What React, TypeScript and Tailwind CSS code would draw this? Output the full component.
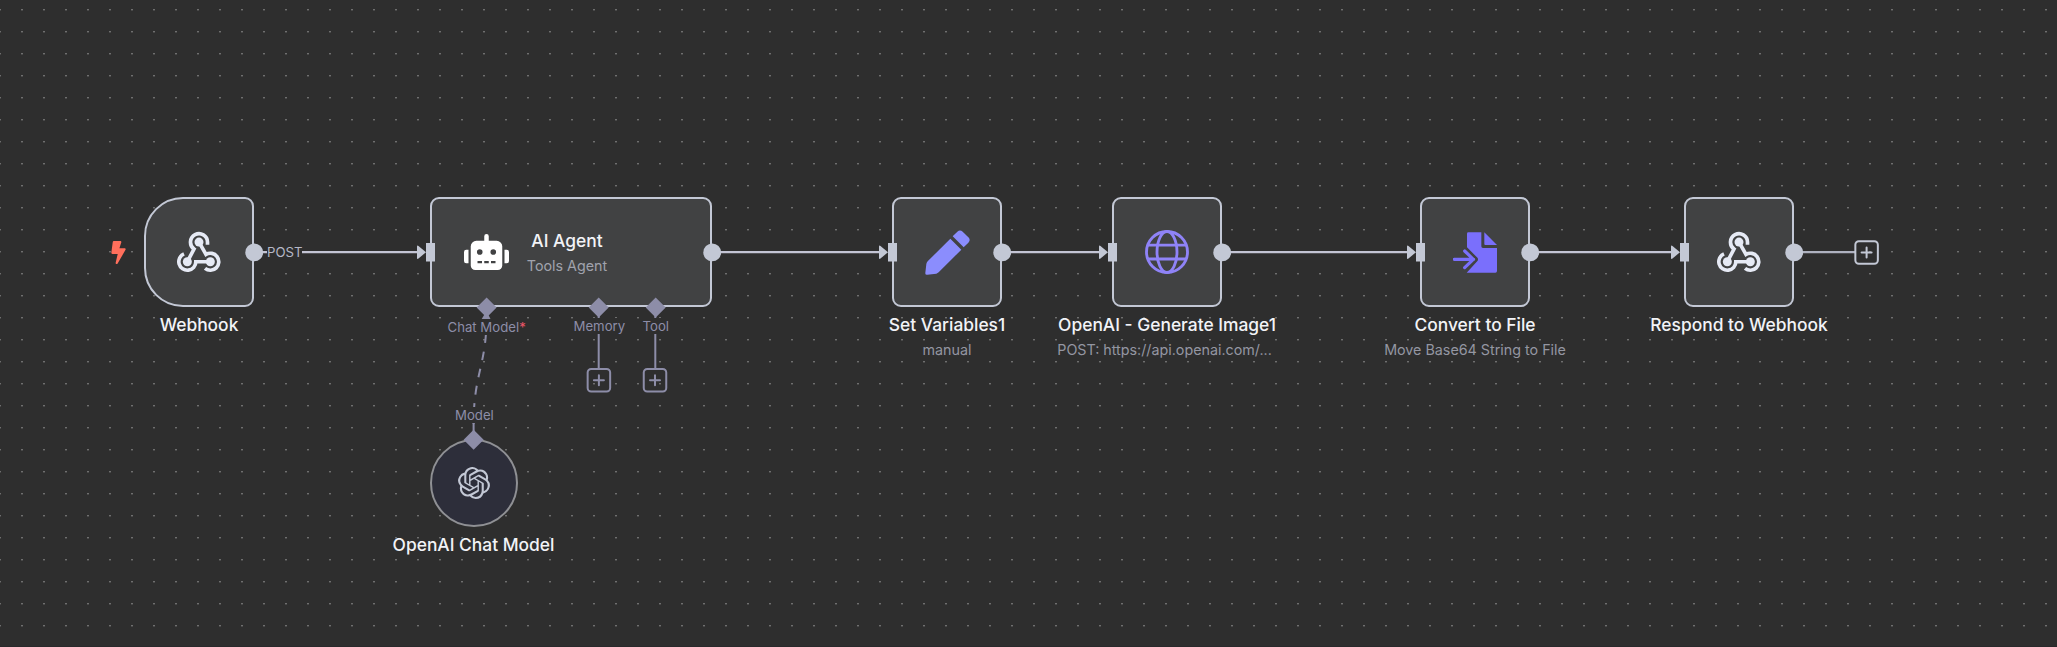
import React from "react";
import { FaBolt, FaRobot } from "react-icons/fa";
import { SiOpenai } from "react-icons/si";

const WebhookIcon = () => (
  <svg className="h-[41.5px] w-[44px]" viewBox="0 0 132 124" fill="none" stroke="#e6eaf5" strokeWidth="11">
    <path d="M91.5 41V33A25.5 25.5 0 1 0 51 54L31 92" />
    <path d="M66 33L87 70A25.5 25.5 0 1 1 84 112" />
    <path d="M100 92H56.5A25.5 25.5 0 1 1 21 68.500" />
    <g fill="#e6eaf5" stroke="none">
      <circle cx="66" cy="33" r="13.500" />
      <circle cx="31" cy="92" r="13.500" />
      <circle cx="100" cy="92" r="13.500" />
    </g>
  </svg>
);

const PenIcon = () => (
  <svg className="size-[45px]" viewBox="0 0 135 135" fill="#8b8dfd">
    <path d="M76 26L109 59L41 127Q38 130 34 131L7 134Q0 135 1 128L4 102Q5 97 8 94Z" />
    <path d="M83 19L97 5Q105 -2 113 5L130 22Q138 30 130 38L116 52Z" />
  </svg>
);

const GlobeIcon = () => (
  <svg className="size-[44px]" viewBox="0 0 132 132" fill="none" stroke="#8f83f7" strokeWidth="8.500">
    <circle cx="66" cy="66" r="61.500" />
    <ellipse cx="66" cy="66" rx="30" ry="61.500" />
    <path d="M8 45.500H124M8 87H124" />
  </svg>
);

const FileIcon = () => (
  <svg className="h-[41px] w-[44px]" viewBox="0 0 132 123" fill="#7a6ffc">
    <path d="M42 5Q42 1 46 1H85V43Q85 48 90 48H132V117Q132 122 127 122H41L74 86Q76 82 74 78L42 46Z" />
    <path d="M94 1L132 39H97Q94 39 94 36Z" />
    <path d="M4 82H62M35 57L61 82L35 107" fill="none" stroke="#7a6ffc" strokeWidth="9.500" strokeLinecap="round" strokeLinejoin="round" />
  </svg>
);

const nodes = [
  { title: "Webhook", sub: "", pos: "left-[99px]", shape: "rounded-l-[39px] rounded-r-[9px]", nudge: "", icon: <WebhookIcon /> },
  { title: "Set Variables1", sub: "manual", pos: "left-[847px]", shape: "rounded-[9px]", nudge: "", icon: <PenIcon /> },
  { title: "OpenAI - Generate Image1", sub: "POST: https://api.openai.com/...", pos: "left-[1067px]", shape: "rounded-[9px]", nudge: "pr-[5px]", icon: <GlobeIcon /> },
  { title: "Convert to File", sub: "Move Base64 String to File", pos: "left-[1375px]", shape: "rounded-[9px]", nudge: "", icon: <FileIcon /> },
  { title: "Respond to Webhook", sub: "", pos: "left-[1639px]", shape: "rounded-[9px]", nudge: "", icon: <WebhookIcon /> },
];

const edges = [
  [254, 430],
  [712, 892],
  [1002, 1112],
  [1222, 1420],
  [1530, 1684],
];

const Plus = ({ x, y, color }: { x: number; y: number; color: string }) => (
  <g stroke={color} strokeWidth="2" fill="none">
    <rect x={x - 11.25} y={y - 11.25} width="22.500" height="22.500" rx="3.500" />
    <path d={`M${x - 5} ${y}H${x + 5}M${x} ${y - 5}V${y + 5}`} strokeLinecap="round" />
  </g>
);

const Diamond = ({ x, y }: { x: number; y: number }) => (
  <path d={`M${x} ${y - 10}L${x + 10} ${y}L${x} ${y + 10}L${x - 10} ${y}Z`} fill="#8d8da8" />
);

export default function App() {
  return (
    <main className="relative h-[647px] w-[2057px] overflow-hidden bg-[#2e2e2e] font-['Inter',sans-serif]">
      <svg className="absolute inset-0 size-full">
        <defs>
          <pattern id="dots" width="22" height="22" patternUnits="userSpaceOnUse">
            <rect x="0" y="9" width="1" height="1" fill="#6f6f6f" />
            <rect x="21" y="9" width="1" height="1" fill="#6f6f6f" />
            <rect x="0" y="10" width="1" height="1" fill="#494949" />
            <rect x="21" y="10" width="1" height="1" fill="#494949" />
          </pattern>
        </defs>
        <rect width="2057" height="647" fill="url(#dots)" />
        <g stroke="#c3c4d4" strokeWidth="2.200">
          {edges.map(([a, b]) => (
            <path key={a} d={`M${a} 252.200H${b - 8}`} />
          ))}
          <path d="M1794 252.200H1855" stroke="#aeb1bf" />
        </g>
        <g stroke="#8d8da8" strokeWidth="2">
          <path d="M598.700 307V368M655.300 307V368M473.600 420V440" />
          <path d="M486.500 318C486.500 365 473.600 374 473.600 424" fill="none" strokeDasharray="8.800 8.800" strokeDashoffset="1.600" />
        </g>
        <path d="M480.500 321L486.500 311L491.500 321Z" fill="#8d8da8" />
        <Plus x={598.9} y={380.2} color="#8d8da8" />
        <Plus x={655} y={380.2} color="#8d8da8" />
        <Plus x={1866.6} y={252.5} color="#c3c8d5" />
      </svg>

      <FaBolt className="absolute top-[241px] left-[111px] h-[23px] w-[15px] text-[#ff6f5c]" />

      {nodes.map((n) => (
        <section key={n.title} className={`absolute top-[197px] flex w-[200px] flex-col items-center ${n.pos}`}>
          <div className={`flex size-[110px] items-center justify-center border-2 border-[#c3c8d5] bg-[#414243] ${n.shape}`}>{n.icon}</div>
          <h2 className="mt-[7px] text-[17.4px] leading-[22px] font-[450] whitespace-nowrap text-[#f2f3f7]">{n.title}</h2>
          {n.sub && <p className={`mt-[5px] text-[14.3px] leading-[18px] whitespace-nowrap text-[#9496a2] ${n.nudge}`}>{n.sub}</p>}
        </section>
      ))}

      <section className="absolute top-[197px] left-[430px] flex h-[110px] w-[282px] items-center rounded-[9px] border-2 border-[#c3c8d5] bg-[#414243] pl-[32px]">
        <FaRobot className="h-[36px] w-[45px] text-white" />
        <div className="ml-[16px] flex w-[84px] flex-col items-center whitespace-nowrap">
          <h2 className="text-[17.4px] leading-[22px] font-[450] text-[#f2f3f7]">AI Agent</h2>
          <p className="mt-[5px] text-[14.3px] leading-[18px] text-[#a0a2ad]">Tools Agent</p>
        </div>
      </section>

      <section className="absolute top-[439px] left-[373.5px] flex w-[200px] flex-col items-center">
        <div className="flex size-[88px] items-center justify-center rounded-full border-2 border-[#8f9094] bg-[#2d2e3a]">
          <SiOpenai className="size-[32px] text-[#c3c8d5]" />
        </div>
        <h2 className="mt-[7px] text-[17.4px] leading-[22px] font-[450] whitespace-nowrap text-[#f2f3f7]">OpenAI Chat Model</h2>
      </section>

      <span className="absolute top-[244px] left-[267px] bg-[#2e2e2e] text-[13.2px] leading-4 text-[#b5b7c6]">POST</span>
      <span className="absolute top-[319px] left-[447.5px] bg-[#2e2e2e] text-[13.2px] leading-4 whitespace-nowrap text-[#8d8da8]">
        Chat Model<span className="text-[#f0566a]">*</span>
      </span>
      <span className="absolute top-[318px] left-[573.5px] bg-[#2e2e2e] text-[13.2px] leading-4 text-[#8d8da8]">Memory</span>
      <span className="absolute top-[318px] left-[642.5px] bg-[#2e2e2e] text-[13.2px] leading-4 text-[#8d8da8]">Tool</span>
      <span className="absolute top-[407px] left-[455px] bg-[#2e2e2e] text-[13.2px] leading-4 text-[#8d8da8]">Model</span>

      <svg className="absolute inset-0 size-full">
        <g fill="#c3c8d5">
          {edges.map(([a, b]) => (
            <g key={a}>
              <circle cx={a + 0.2} cy="252.400" r="8.900" />
              <path d={`M${b - 13} 246.500Q${b - 13} 245 ${b - 11.5} 246L${b - 4} 252.200L${b - 11.5} 258.500Q${b - 13} 259.500 ${b - 13} 258Z`} />
              <rect x={b - 4} y="243" width="9" height="18.500" />
            </g>
          ))}
          <circle cx="1794.200" cy="252.400" r="8.900" />
        </g>
        <Diamond x={486.6} y={307.4} />
        <Diamond x={598.7} y={307.4} />
        <Diamond x={655.7} y={307.4} />
        <Diamond x={473.6} y={439.7} />
      </svg>
      <div className="absolute bottom-0 left-0 h-px w-full bg-[#29292b]" />
    </main>
  );
}
